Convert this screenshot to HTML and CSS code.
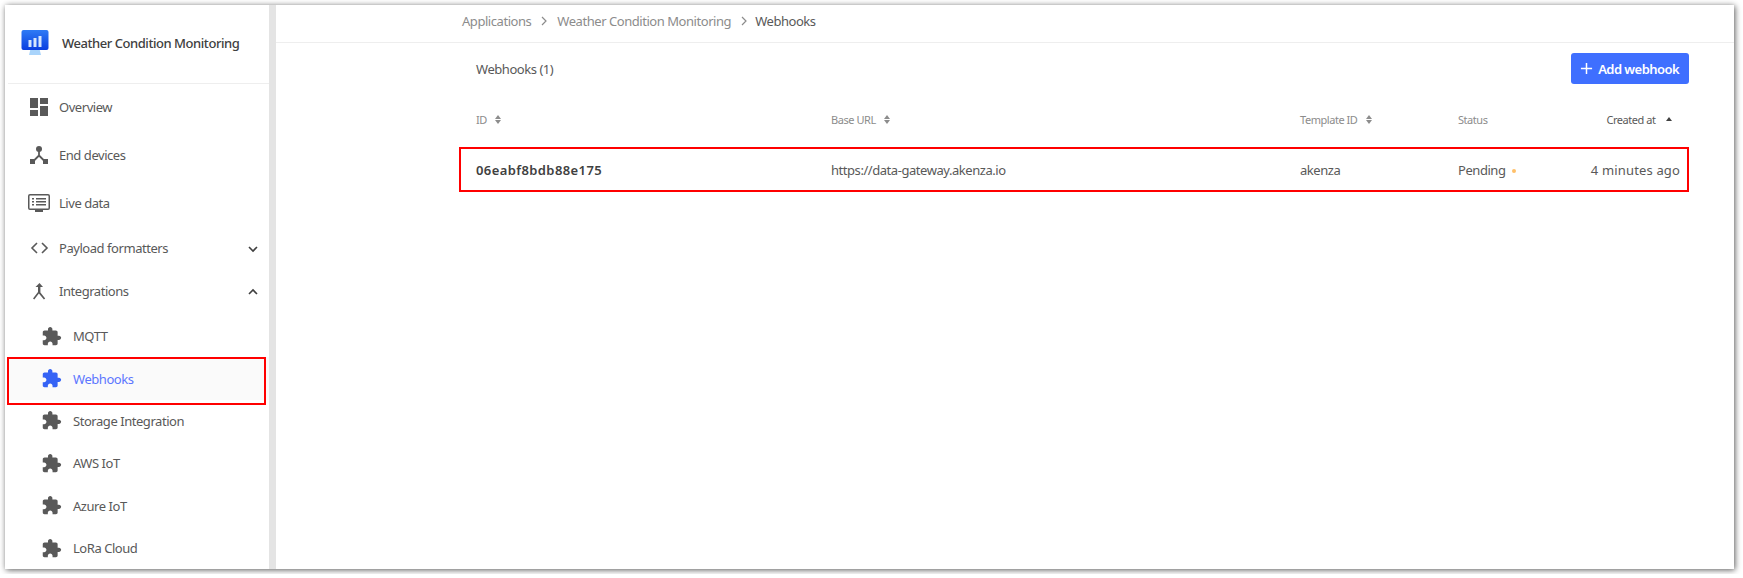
FILE: index.html
```html
<!DOCTYPE html>
<html lang="en">
<head>
    <meta charset="UTF-8">
    <title>Webhooks - Weather Condition Monitoring</title>
    <link rel="stylesheet" href="styles.css">
</head>
<body>
    <div class="window">
        <aside class="sidebar">
            <div class="app-title">
                <svg class="app-logo" viewBox="0 0 28 26" width="28" height="26">
                    <defs>
                        <linearGradient id="screen" x1="0" y1="0" x2="0" y2="1">
                            <stop offset="0" stop-color="#2f7bf5"/>
                            <stop offset="1" stop-color="#0a3fe0"/>
                        </linearGradient>
                    </defs>
                    <path d="M9.500 19h9l1.500 6H8z" fill="#a9d4fb"/>
                    <rect x="0.500" y="0" width="27" height="20" rx="2" fill="url(#screen)"/>
                    <rect x="7.500" y="10" width="3" height="7" fill="#d6e6fd"/>
                    <rect x="12.500" y="8" width="3" height="9" fill="#d6e6fd"/>
                    <rect x="17.500" y="6" width="3" height="11" fill="#d6e6fd"/>
                </svg>
                <span>Weather Condition Monitoring</span>
            </div>

            <nav class="menu">
                <a class="menu-item tall">
                    <svg class="icon" viewBox="0 0 24 24"><path d="M3 13h8V3H3v10zm0 8h8v-6H3v6zm10 0h8V11h-8v10zm0-18v6h8V3h-8z"/></svg>
                    Overview
                </a>
                <a class="menu-item tall">
                    <svg class="icon" viewBox="0 0 24 24">
                        <circle cx="12" cy="6" r="3"/>
                        <rect x="3" y="16" width="5" height="5"/>
                        <rect x="16" y="16" width="5" height="5"/>
                        <path d="M12 7v6M12 12.500l-6 6M12 12.500l6 6" stroke="#595959" stroke-width="1.800" fill="none"/>
                    </svg>
                    End devices
                </a>
                <a class="menu-item tall">
                    <svg class="icon" viewBox="0 0 24 24">
                        <path d="M3 3h18a2 2 0 0 1 2 2v12a2 2 0 0 1-2 2h-5v2H8v-2H3a2 2 0 0 1-2-2V5a2 2 0 0 1 2-2zm0 1.500a.5.5 0 0 0-.5.500v12a.5.5 0 0 0 .5.500h18a.5.5 0 0 0 .5-.5V5a.5.5 0 0 0-.5-.5H3z"/>
                        <path d="M5 7h2v1.500H5zM9 7h10v1.500H9zM5 10h2v1.500H5zM9 10h10v1.500H9zM5 13h2v1.500H5zM9 13h10v1.500H9z"/>
                    </svg>
                    Live data
                </a>
                <a class="menu-item code">
                    <svg class="icon" viewBox="0 0 24 24">
                        <path d="M10 7l-5 5 5 5M15 7l5 5-5 5" stroke="#595959" stroke-width="1.600" fill="none"/>
                    </svg>
                    Payload formatters
                    <svg class="chevron" viewBox="0 0 12 12"><path d="M2 4l4 4 4-4" stroke="#404040" stroke-width="1.600" fill="none"/></svg>
                </a>
                <a class="menu-item open">
                    <svg class="icon" viewBox="0 0 24 24">
                        <path d="M12.500 4l3.500 4h-2.600v5.500l4.800 6-1.300 1-5-6.100-4.600 6.100-1.300-1 5-6.500V8H8.500z"/>
                    </svg>
                    Integrations
                    <svg class="chevron" viewBox="0 0 12 12"><path d="M2 8l4-4 4 4" stroke="#404040" stroke-width="1.600" fill="none"/></svg>
                </a>

                <a class="menu-item sub">
                    <svg class="icon puzzle" viewBox="0 0 24 24"><use href="#puzzle"/></svg>
                    MQTT
                </a>
                <a class="menu-item sub active">
                    <svg class="icon puzzle" viewBox="0 0 24 24"><use href="#puzzle"/></svg>
                    Webhooks
                    <span class="marker"></span>
                </a>
                <a class="menu-item sub">
                    <svg class="icon puzzle" viewBox="0 0 24 24"><use href="#puzzle"/></svg>
                    Storage Integration
                </a>
                <a class="menu-item sub">
                    <svg class="icon puzzle" viewBox="0 0 24 24"><use href="#puzzle"/></svg>
                    AWS IoT
                </a>
                <a class="menu-item sub">
                    <svg class="icon puzzle" viewBox="0 0 24 24"><use href="#puzzle"/></svg>
                    Azure IoT
                </a>
                <a class="menu-item sub">
                    <svg class="icon puzzle" viewBox="0 0 24 24"><use href="#puzzle"/></svg>
                    LoRa Cloud
                </a>
            </nav>
        </aside>

        <main class="content">
            <div class="breadcrumb">
                <span>Applications</span>
                <svg class="crumb-sep" viewBox="0 0 10 10"><path d="M3 1l4 4-4 4" stroke="#8c8c8c" stroke-width="1.200" fill="none"/></svg>
                <span>Weather Condition Monitoring</span>
                <svg class="crumb-sep" viewBox="0 0 10 10"><path d="M3 1l4 4-4 4" stroke="#8c8c8c" stroke-width="1.200" fill="none"/></svg>
                <span class="current">Webhooks</span>
            </div>

            <section class="panel">
                <div class="toolbar">
                    <span class="count">Webhooks (1)</span>
                    <button class="add-btn" type="button">
                        <svg viewBox="0 0 14 14" width="13" height="13"><path d="M7 1v12M1 7h12" stroke="#fff" stroke-width="1.600"/></svg>
                        Add webhook
                    </button>
                </div>

                <div class="table-head">
                    <span>ID <i class="sorter"></i></span>
                    <span>Base URL <i class="sorter"></i></span>
                    <span>Template ID <i class="sorter"></i></span>
                    <span>Status</span>
                    <span class="sorted">Created at <i class="sort-up"></i></span>
                </div>

                <div class="table-row">
                    <span class="cell-id">06eabf8bdb88e175</span>
                    <span>https://data-gateway.akenza.io</span>
                    <span>akenza</span>
                    <span>Pending <i class="dot"></i></span>
                    <span class="cell-date">4 minutes ago</span>
                </div>
            </section>
        </main>
    </div>

    <svg class="defs" width="0" height="0">
        <symbol id="puzzle" viewBox="0 0 24 24">
            <path d="M20.500 11H19V7c0-1.100-.9-2-2-2h-4V3.500C13 2.120 11.880 1 10.500 1S8 2.120 8 3.500V5H4c-1.100 0-1.990.9-1.990 2v3.800H3.500c1.490 0 2.700 1.210 2.700 2.700s-1.210 2.700-2.700 2.700H2V20c0 1.100.9 2 2 2h3.800v-1.500c0-1.490 1.210-2.700 2.700-2.700 1.490 0 2.700 1.210 2.700 2.700V22H17c1.100 0 2-.9 2-2v-4h1.500c1.380 0 2.500-1.120 2.500-2.500S21.880 11 20.500 11z"/>
        </symbol>
    </svg>
</body>
</html>
```

FILE: styles.css
```css
body {
    margin: 0;
    background: #fff;
    font-family: "Noto Sans", sans-serif;
    font-size: 13px;
    letter-spacing: -0.45px;
    color: #595959;
    overflow: hidden;
}

.window {
    display: flex;
    width: 1729px;
    height: 564px;
    margin: 5px;
    background: #fff;
    box-shadow: 1px 1px 6px rgba(0, 0, 0, 0.65);
    overflow: hidden;
}

.defs {
    position: absolute;
}

/* sidebar */
.sidebar {
    flex: none;
    width: 271px;
    padding-left: 3px;
    box-sizing: border-box;
    border-right: 7px solid #e4e4e4;
}

.app-title {
    display: flex;
    align-items: center;
    gap: 13px;
    height: 75px;
    padding: 0 0 3px 13px;
    border-bottom: 1px solid #eee;
    font-weight: 500;
    color: #404040;
}

.app-logo {
    flex: none;
}

.menu {
    margin-top: -1px;
}

.menu-item {
    position: relative;
    display: flex;
    align-items: center;
    padding-left: 19px;
}

.menu-item.tall {
    height: 48px;
}

.menu-item.code {
    height: 42px;
}

.menu-item.open {
    height: 44px;
    margin-bottom: 2px;
}

.icon {
    flex: none;
    width: 24px;
    height: 24px;
    margin-right: 8px;
    fill: #595959;
}

.chevron {
    position: absolute;
    right: 10px;
    top: 50%;
    width: 12px;
    height: 12px;
    margin-top: -5px;
}

.menu-item.sub {
    height: 42.400px;
    padding-left: 33px;
}

.icon.puzzle {
    width: 21px;
    height: 21px;
    margin-right: 11px;
}

.menu-item.active {
    background: #fafafa;
    color: #5c76ff;
}

.menu-item.active .icon {
    fill: #3563f5;
}

.marker {
    position: absolute;
    left: -1px;
    top: 0;
    width: 255px;
    height: 44px;
    border: 2px solid #f00;
}

/* main */
.content {
    flex: 1;
    min-width: 0;
}

.breadcrumb {
    display: flex;
    align-items: center;
    gap: 8px;
    height: 38px;
    padding: 0 0 6px 186px;
    border-bottom: 1px solid #eee;
    box-sizing: border-box;
    color: #8c8c8c;
}

.crumb-sep {
    width: 10px;
    height: 10px;
}

.current {
    margin-left: -2px;
    color: #595959;
}

.panel {
    padding: 0 45px 0 183px;
}

.toolbar {
    display: flex;
    justify-content: space-between;
    align-items: center;
    height: 51px;
    padding-left: 17px;
}

.add-btn {
    display: flex;
    align-items: center;
    gap: 5px;
    height: 31px;
    padding: 0 10px 0 9px;
    border: none;
    border-radius: 3px;
    background: #3f6fff;
    color: #fff;
    font: 600 13px "Noto Sans", sans-serif;
    letter-spacing: -0.55px;
}

.table-head,
.table-row {
    display: grid;
    grid-template-columns: 355px 469px 158px 1fr auto;
    align-items: center;
    padding: 0 7px 0 15px;
}

.table-head {
    height: 50px;
    padding: 0 9px 3px 17px;
    font-size: 11px;
    color: #8c8c8c;
}

.table-row {
    height: 45px;
    border: 2px solid #f00;
    box-sizing: border-box;
}

.cell-id {
    font-weight: 600;
    letter-spacing: 0.4px;
    color: #404040;
}

.cell-date {
    letter-spacing: 0.15px;
}

.sorted {
    color: #595959;
    padding-right: 7px;
}

.sorter,
.sort-up {
    display: inline-block;
    position: relative;
    width: 7px;
    height: 9px;
    margin-left: 6px;
}

.sort-up {
    margin-left: 8px;
}

.sorter::before,
.sorter::after,
.sort-up::before {
    content: "";
    position: absolute;
    left: 0;
    border-left: 3.500px solid transparent;
    border-right: 3.500px solid transparent;
}

.sorter::before,
.sort-up::before {
    top: 0;
    border-bottom: 4px solid #8c8c8c;
}

.sorter::after {
    bottom: 0;
    border-top: 4px solid #8c8c8c;
}

.sort-up::before {
    top: 2px;
    border-bottom-color: #404040;
}

.dot {
    display: inline-block;
    width: 4px;
    height: 4px;
    margin-left: 4px;
    border-radius: 50%;
    background: #ffc069;
    vertical-align: middle;
}
```
